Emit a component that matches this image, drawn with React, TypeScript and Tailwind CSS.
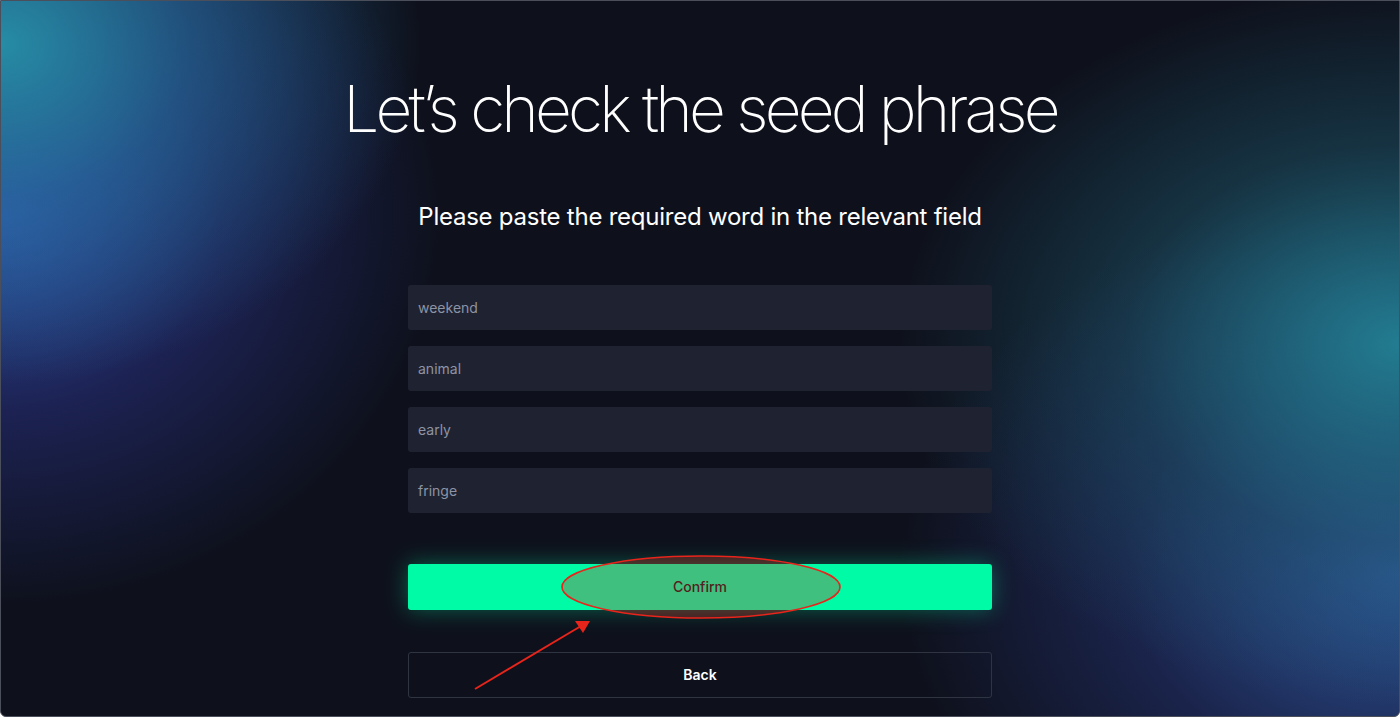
const words = ['weekend', 'animal', 'early', 'fringe'];

export default function App() {
  return (
    <div className="relative w-[1400px] h-[717px] overflow-hidden rounded-b-md border border-[#4b4f5c] bg-[#0e111c] font-['Inter',sans-serif] bg-[radial-gradient(ellipse_420px_340px_at_0%_6%,rgba(38,140,165,1),rgba(38,112,160,0.6)_45%,transparent_100%),radial-gradient(ellipse_440px_390px_at_0%_30%,rgba(48,84,170,0.95),rgba(40,48,128,0.55)_50%,transparent_100%),radial-gradient(ellipse_500px_360px_at_100%_48%,rgba(34,124,145,1),rgba(30,84,104,0.5)_55%,transparent_100%),radial-gradient(ellipse_500px_380px_at_100%_80%,rgba(46,88,156,1),rgba(36,50,112,0.55)_55%,transparent_100%)]">
      <div className="flex flex-col items-center pt-[70px]">
        <h1 className="text-[64px] leading-[76px] font-extralight tracking-[-0.06em] text-white">
          Let’s check the seed phrase
        </h1>
        <p className="mt-[55px] text-[24px] leading-[30px] text-white tracking-[-0.01em]">
          Please paste the required word in the relevant field
        </p>

        <div className="mt-[53px] flex w-[584px] flex-col gap-4">
          {words.map((w) => (
            <div key={w} className="flex h-[45px] items-center rounded-[3px] bg-[#1f2331] px-[10px] text-sm text-[#8d93a5]">
              {w}
            </div>
          ))}
        </div>

        <button className="mt-[51px] flex h-[46px] w-[584px] items-center justify-center rounded-[3px] bg-[#00fba6] text-sm font-medium text-[#1c1c1c] shadow-[0_0_22px_rgba(0,251,166,0.35)]">
          Confirm
        </button>

        <button className="mt-[42px] flex h-[46px] w-[584px] items-center justify-center rounded-[3px] border border-[#2f3443] text-sm font-semibold text-white">
          Back
        </button>
      </div>

      <svg className="pointer-events-none absolute left-0 top-0" width="1400" height="717">
        <ellipse cx="700" cy="586" rx="139" ry="31" fill="rgba(230,40,30,0.28)" stroke="#e8241b" strokeWidth="1.6" />
        <line x1="474" y1="688" x2="580" y2="625" stroke="#e8241b" strokeWidth="2" />
        <polygon points="589,620 574,620 582,632" fill="#e8241b" />
      </svg>
    </div>
  );
}
